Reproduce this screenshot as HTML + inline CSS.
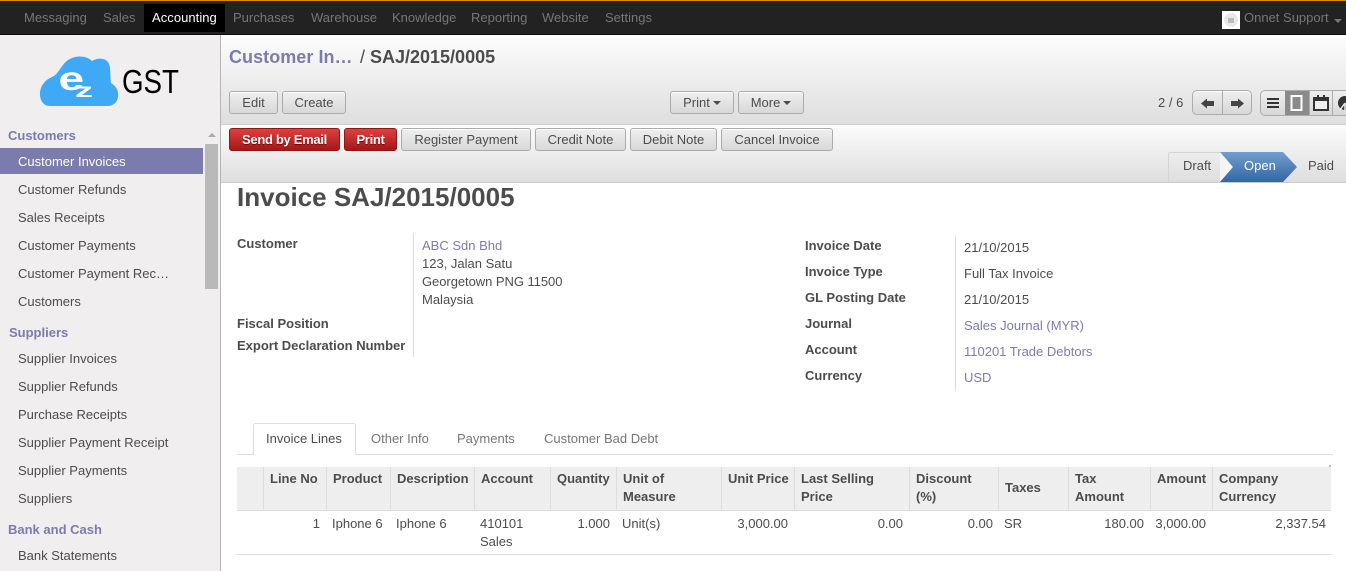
<!DOCTYPE html>
<html><head><meta charset="utf-8"><style>
*{box-sizing:border-box}
html,body{margin:0;padding:0;width:1346px;height:571px;overflow:hidden;background:#fff}
body{position:relative;font-family:"Liberation Sans",Arial,sans-serif;font-size:13px;color:#4c4c4c;letter-spacing:0}
.a,.t{position:absolute}
.t{white-space:nowrap;line-height:18px;height:18px;margin-top:1px}
.m{color:#777}
.b{font-weight:bold;color:#4c4c4c;letter-spacing:0}
.l{color:#7c7bad}
.r{text-align:right}
.s{font-weight:bold;color:#7c7bad;font-size:13px;letter-spacing:0}
.btn{position:absolute;height:23px;border:1px solid #ababab;border-radius:3px;background:linear-gradient(#efefef,#d8d8d8);color:#4c4c4c;text-align:center;line-height:21px;white-space:nowrap;box-shadow:inset 0 1px 0 #fff}
.red{background:linear-gradient(#df3f3f,#a41818);border-color:#8d1616;color:#fff;font-weight:bold;text-shadow:0 1px 1px #700;box-shadow:none;letter-spacing:-.3px}
.caret{display:inline-block;border:4px solid transparent;border-top-color:#4c4c4c;border-bottom:0;vertical-align:2px;margin-left:3px}
.v{position:absolute;background:#ddd;width:1px}
</style></head><body>

<!-- top bar -->
<div class="a" style="left:0;top:0;width:1346px;height:35px;background:#222;border-top:1px solid #e0860f;border-bottom:1px solid #0b0b0b"></div>
<div class="a" style="left:144px;top:4px;width:81px;height:28px;background:#000"></div>
<div class="t m" style="left:24px;top:8px">Messaging</div>
<div class="t m" style="left:103px;top:8px">Sales</div>
<div class="t" style="left:152px;top:8px;color:#fff;letter-spacing:.05px">Accounting</div>
<div class="t m" style="left:233px;top:8px">Purchases</div>
<div class="t m" style="left:311px;top:8px">Warehouse</div>
<div class="t m" style="left:392px;top:8px">Knowledge</div>
<div class="t m" style="left:471px;top:8px">Reporting</div>
<div class="t m" style="left:542px;top:8px">Website</div>
<div class="t m" style="left:605px;top:8px">Settings</div>
<div class="a" style="left:1222px;top:11px;width:18px;height:18px;background:#fff"></div>
<svg class="a" style="left:1222px;top:11px" width="18" height="18"><circle cx="9" cy="9" r="7" fill="#e8e8e8"/><rect x="6" y="7" width="6" height="5" fill="#bbb"/></svg>
<div class="t m" style="left:1244px;top:8px">Onnet Support</div>
<div class="a" style="left:1334px;top:19px;border:4px solid transparent;border-top-color:#777;border-bottom:0"></div>

<!-- sidebar -->
<div class="a" style="left:0;top:35px;width:220px;height:536px;background:#f0eeee;border-right:0"></div>
<div class="a" style="left:220px;top:35px;width:1px;height:536px;background:#b5b5b5"></div>
<svg class="a" style="left:38px;top:54px" width="84" height="54" viewBox="0 0 84 54">
<path d="M12 52 C5 52 2 46 2 40 C2 32 7 26 14 23 C19 21 21 16 25 11 C32 1 47 0 54 7 C60 3 69 4 71 10 C73 15 72 23 73 29 C78 32 81 37 80 43 C79 49 75 52 69 52 Z" fill="#3fa9f5"/>
<text transform="translate(20.5,36) scale(1.4,1)" font-family="Liberation Sans" font-weight="bold" font-size="33" fill="#fff">e</text>
<text transform="translate(37,43) scale(1.9,1)" font-family="Liberation Sans" font-weight="bold" font-size="19" fill="#fff">z</text>
</svg>
<div class="a" style="left:122px;top:63px;font-size:33px;line-height:38px;color:#000;letter-spacing:0;white-space:nowrap;transform:scaleX(.84);transform-origin:left top">GST</div>

<div class="t s" style="left:8px;top:126px">Customers</div>
<div class="a" style="left:0;top:148px;width:203px;height:26px;background:#7c7bad"></div>
<div class="t" style="left:18px;top:152px;color:#fff">Customer Invoices</div>
<div class="t" style="left:18px;top:180px">Customer Refunds</div>
<div class="t" style="left:18px;top:208px">Sales Receipts</div>
<div class="t" style="left:18px;top:236px">Customer Payments</div>
<div class="t" style="left:18px;top:264px">Customer Payment Rec…</div>
<div class="t" style="left:18px;top:292px">Customers</div>
<div class="t s" style="left:9px;top:323px">Suppliers</div>
<div class="t" style="left:18px;top:349px">Supplier Invoices</div>
<div class="t" style="left:18px;top:377px">Supplier Refunds</div>
<div class="t" style="left:18px;top:405px">Purchase Receipts</div>
<div class="t" style="left:18px;top:433px">Supplier Payment Receipt</div>
<div class="t" style="left:18px;top:461px">Supplier Payments</div>
<div class="t" style="left:18px;top:489px">Suppliers</div>
<div class="t s" style="left:8px;top:520px">Bank and Cash</div>
<div class="t" style="left:18px;top:546px">Bank Statements</div>
<!-- scrollbar -->
<div class="a" style="left:204px;top:127px;width:16px;height:444px;background:#f0eeee"></div>
<div class="a" style="left:208px;top:133px;border:4px solid transparent;border-bottom:4px solid #aaa;border-top:0"></div>
<div class="a" style="left:205px;top:144px;width:13px;height:145px;background:#b9b9b9"></div>

<!-- header -->
<div class="a" style="left:221px;top:35px;width:1125px;height:90px;background:linear-gradient(#fdfdfd,#dedede);border-bottom:1px solid #cfcfcf"></div>
<div class="a" style="left:221px;top:125px;width:1125px;height:58px;background:linear-gradient(#fcfcfc,#dedede);border-bottom:1px solid #cacaca"></div>
<div class="a" style="left:229px;top:45px;font-size:18px;line-height:24px;font-weight:bold;color:#7c7bad;white-space:nowrap;letter-spacing:.05px">Customer In…</div>
<div class="a" style="left:360px;top:45px;font-size:18px;line-height:24px;color:#4c4c4c;white-space:nowrap">/</div>
<div class="a" style="left:370px;top:45px;font-size:18px;line-height:24px;font-weight:bold;color:#4c4c4c;white-space:nowrap;letter-spacing:0">SAJ/2015/0005</div>

<div class="btn" style="left:229px;top:91px;width:49px">Edit</div>
<div class="btn" style="left:282px;top:91px;width:64px">Create</div>
<div class="btn" style="left:670px;top:91px;width:64px">Print<span class="caret"></span></div>
<div class="btn" style="left:738px;top:91px;width:66px">More<span class="caret"></span></div>

<div class="t" style="left:1158px;top:93px">2 / 6</div>
<div class="btn" style="left:1192px;top:90px;width:60px;height:25px;border-radius:5px"></div>
<div class="a" style="left:1222px;top:90px;width:1px;height:25px;background:#ababab"></div>
<svg class="a" style="left:1192px;top:90px" width="60" height="25"><path d="M9 13.5 L15 8.5 V11 H22 V16 H15 V18.5 Z M52 13.5 L46 8.5 V11 H39 V16 H46 V18.5 Z" fill="#444"/></svg>
<div class="a" style="left:1260px;top:90px;width:86px;height:26px;border:1px solid #ababab;border-right:0;border-radius:5px 0 0 5px;background:linear-gradient(#efefef,#d8d8d8)"></div>
<div class="a" style="left:1285px;top:91px;width:24px;height:24px;background:#8b8b8b"></div>
<div class="a" style="left:1309px;top:91px;width:1px;height:24px;background:#ababab"></div>
<div class="a" style="left:1332px;top:91px;width:1px;height:24px;background:#ababab"></div>
<svg class="a" style="left:1260px;top:90px" width="86" height="26">
<path d="M7 8h12v2H7zM7 12h12v2H7zM7 16h12v2H7z" fill="#333"/>
<rect x="31.5" y="6" width="10" height="14" fill="#8b8b8b" stroke="#fff" stroke-width="2"/>
<path d="M54 8h14v12H54z" fill="#eee" stroke="#333" stroke-width="2"/><path d="M54 8h14v3H54z" fill="#333"/><path d="M57 5h2v4h-2zM63 5h2v4h-2z" fill="#333"/>
<circle cx="85" cy="13" r="7" fill="#333"/><path d="M85 13 L80 20 M85 13 L85 20" stroke="#eee" stroke-width="1.5"/>
</svg>

<div class="btn red" style="left:229px;top:128px;width:111px">Send by Email</div>
<div class="btn red" style="left:344px;top:128px;width:53px">Print</div>
<div class="btn" style="left:401px;top:128px;width:130px">Register Payment</div>
<div class="btn" style="left:535px;top:128px;width:91px">Credit Note</div>
<div class="btn" style="left:630px;top:128px;width:87px">Debit Note</div>
<div class="btn" style="left:721px;top:128px;width:112px">Cancel Invoice</div>

<!-- status bar -->
<svg class="a" style="left:1168px;top:152px" width="178" height="31">
<path d="M.5 30V2Q.5 .5 2 .5H52" fill="none" stroke="#d4d4d4"/>
<path d="M52 0L65 15L52 30" fill="#f4f4f4"/>
<path d="M0 30H52" stroke="#d4d4d4"/>
<defs><linearGradient id="g" x1="0" y1="0" x2="0" y2="1"><stop offset="0" stop-color="#729fcf"/><stop offset="1" stop-color="#3465a4"/></linearGradient></defs>
<path d="M52 0H115L129 15L115 30H52L65 15Z" fill="url(#g)"/>
</svg>
<div class="t" style="left:1183px;top:156px">Draft</div>
<div class="t" style="left:1244px;top:156px;color:#fff">Open</div>
<div class="t" style="left:1308px;top:156px">Paid</div>

<!-- title -->
<div class="a" style="left:237px;top:181px;font-size:26px;line-height:32px;font-weight:bold;color:#4c4c4c;white-space:nowrap;letter-spacing:0">Invoice <span>SAJ/2015/0005</span></div>

<!-- left fields -->
<div class="t b" style="left:237px;top:234px">Customer</div>
<div class="t b" style="left:237px;top:314px">Fiscal Position</div>
<div class="t b" style="left:237px;top:336px">Export Declaration Number</div>
<div class="v" style="left:413px;top:233px;height:124px"></div>
<div class="t l" style="left:422px;top:236px">ABC Sdn Bhd</div>
<div class="t" style="left:422px;top:254px">123, Jalan Satu</div>
<div class="t" style="left:422px;top:272px;letter-spacing:-.05px">Georgetown PNG 11500</div>
<div class="t" style="left:422px;top:290px">Malaysia</div>

<!-- right fields -->
<div class="t b" style="left:805px;top:236px">Invoice Date</div>
<div class="t b" style="left:805px;top:262px">Invoice Type</div>
<div class="t b" style="left:805px;top:288px">GL Posting Date</div>
<div class="t b" style="left:805px;top:314px">Journal</div>
<div class="t b" style="left:805px;top:340px">Account</div>
<div class="t b" style="left:805px;top:366px">Currency</div>
<div class="v" style="left:955px;top:235px;height:156px"></div>
<div class="t" style="left:964px;top:238px">21/10/2015</div>
<div class="t" style="left:964px;top:264px">Full Tax Invoice</div>
<div class="t" style="left:964px;top:290px">21/10/2015</div>
<div class="t l" style="left:964px;top:316px">Sales Journal (MYR)</div>
<div class="t l" style="left:964px;top:342px">110201 Trade Debtors</div>
<div class="t l" style="left:964px;top:368px">USD</div>

<!-- tabs -->
<div class="a" style="left:237px;top:454px;width:1096px;height:1px;background:#ddd"></div>
<div class="a" style="left:253px;top:423px;width:103px;height:32px;background:#fff;border:1px solid #ddd;border-bottom:0;border-radius:3px 3px 0 0"></div>
<div class="t" style="left:266px;top:429px">Invoice Lines</div>
<div class="t" style="left:371px;top:429px;color:#777">Other Info</div>
<div class="t" style="left:457px;top:429px;color:#777">Payments</div>
<div class="t" style="left:544px;top:429px;color:#777">Customer Bad Debt</div>

<!-- table -->
<div class="a" style="left:237px;top:467px;width:1094px;height:43px;background:#eee"></div>
<div class="a" style="left:237px;top:510px;width:1094px;height:1px;background:#ddd"></div>
<div class="a" style="left:237px;top:554px;width:1094px;height:1px;background:#ddd"></div>
<div class="a" style="left:1329px;top:465px;width:2px;height:2px;background:#bbb"></div>
<div class="v" style="left:263px;top:467px;height:43px"></div>
<div class="v" style="left:326px;top:467px;height:43px"></div>
<div class="v" style="left:390px;top:467px;height:43px"></div>
<div class="v" style="left:474px;top:467px;height:43px"></div>
<div class="v" style="left:550px;top:467px;height:43px"></div>
<div class="v" style="left:616px;top:467px;height:43px"></div>
<div class="v" style="left:721px;top:467px;height:43px"></div>
<div class="v" style="left:794px;top:467px;height:43px"></div>
<div class="v" style="left:909px;top:467px;height:43px"></div>
<div class="v" style="left:998px;top:467px;height:43px"></div>
<div class="v" style="left:1068px;top:467px;height:43px"></div>
<div class="v" style="left:1150px;top:467px;height:43px"></div>
<div class="v" style="left:1212px;top:467px;height:43px"></div>

<div class="t b" style="left:270px;top:469px">Line No</div>
<div class="t b" style="left:333px;top:469px">Product</div>
<div class="t b" style="left:397px;top:469px">Description</div>
<div class="t b" style="left:481px;top:469px">Account</div>
<div class="t b" style="left:557px;top:469px">Quantity</div>
<div class="t b" style="left:623px;top:469px">Unit of</div>
<div class="t b" style="left:623px;top:487px">Measure</div>
<div class="t b" style="left:728px;top:469px">Unit Price</div>
<div class="t b" style="left:801px;top:469px">Last Selling</div>
<div class="t b" style="left:801px;top:487px">Price</div>
<div class="t b" style="left:916px;top:469px">Discount</div>
<div class="t b" style="left:916px;top:487px">(%)</div>
<div class="t b" style="left:1005px;top:478px">Taxes</div>
<div class="t b" style="left:1075px;top:469px">Tax</div>
<div class="t b" style="left:1075px;top:487px">Amount</div>
<div class="t b" style="left:1157px;top:469px">Amount</div>
<div class="t b" style="left:1219px;top:469px">Company</div>
<div class="t b" style="left:1219px;top:487px">Currency</div>

<div class="t r" style="left:270px;top:514px;width:50px">1</div>
<div class="t" style="left:332px;top:514px">Iphone 6</div>
<div class="t" style="left:396px;top:514px">Iphone 6</div>
<div class="t" style="left:480px;top:514px">410101</div>
<div class="t" style="left:480px;top:532px">Sales</div>
<div class="t r" style="left:550px;top:514px;width:60px">1.000</div>
<div class="t" style="left:622px;top:514px">Unit(s)</div>
<div class="t r" style="left:708px;top:514px;width:80px">3,000.00</div>
<div class="t r" style="left:823px;top:514px;width:80px">0.00</div>
<div class="t r" style="left:912px;top:514px;width:81px">0.00</div>
<div class="t" style="left:1004px;top:514px">SR</div>
<div class="t r" style="left:1064px;top:514px;width:80px">180.00</div>
<div class="t r" style="left:1126px;top:514px;width:80px">3,000.00</div>
<div class="t r" style="left:1245px;top:514px;width:81px">2,337.54</div>

</body></html>
